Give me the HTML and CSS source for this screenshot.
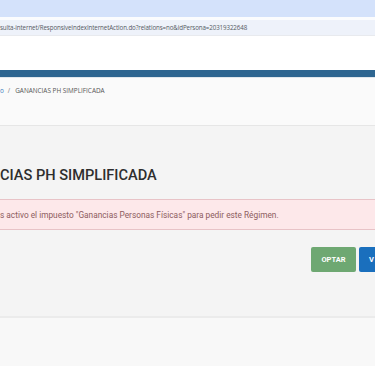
FILE: index.html
```html
<!DOCTYPE html>
<html lang="es">
<head>
<meta charset="utf-8">
<link rel="stylesheet" href="styles.css">
</head>
<body>
<div class="chrome-top"></div>
<div class="chrome-gap"></div>
<div class="url-bar"><span class="url">sulta-internet/ResponsiveIndexInternetAction.do?relations=no&amp;idPersona=20319322648</span></div>
<div class="white-area"></div>
<div class="navband"></div>
<div class="breadcrumb"><a class="crumb-link">o</a><span class="sep">/</span><span class="crumb">GANANCIAS PH SIMPLIFICADA</span></div>
<main class="content">
  <h1 class="title">CIAS PH SIMPLIFICADA</h1>
  <div class="alert">s activo el impuesto "Ganancias Personas Físicas" para pedir este Régimen.</div>
  <div class="actions">
    <button class="btn btn-green">OPTAR</button>
    <button class="btn btn-blue">V</button>
  </div>
</main>
<footer class="footer"></footer>
</body>
</html>
```
FILE: styles.css
```css
html, body {
  margin: 0;
  padding: 0;
  overflow: hidden;
  width: 375px;
  height: 366px;
  font-family: Roboto, "Liberation Sans", sans-serif;
}
.chrome-top {
  height: 17px;
  background: #d4e2fb;
}
.chrome-gap {
  height: 3px;
  background: #fbfcfe;
}
.url-bar {
  height: 15px;
  background: #eef2fa;
  display: flex;
  align-items: center;
  font-family: "Open Sans", "Liberation Sans", sans-serif;
  font-size: 6.2px;
  color: #555a62;
  white-space: nowrap;
  overflow: hidden;
  letter-spacing: -0.1px;
}
.white-area {
  height: 35px;
  background: #ffffff;
  border-top: 1px solid #e8eaee;
  box-sizing: border-box;
}
.navband {
  height: 7px;
  background: #2d6590;
  border-bottom: 1px solid #dfe6ec;
}
.breadcrumb {
  height: 48px;
  background: #fafafa;
  border-bottom: 1px solid #e6e6e6;
  box-sizing: border-box;
  padding-top: 8px;
  font-family: "Open Sans", "Liberation Sans", sans-serif;
  font-size: 6.4px;
  color: #555;
  white-space: nowrap;
}
.crumb-link {
  color: #3a7fc0;
}
.sep {
  margin: 0 5px 0 4px;
  color: #777;
}
.content {
  background: #f4f4f4;
  height: 192px;
  border-bottom: 2px solid #ebebeb;
  padding-top: 40px;
  box-sizing: border-box;
}
.title {
  margin: 0 0 15px 0;
  font-size: 14.6px;
  font-weight: 500;
  color: #2e2e2e;
  line-height: 18px;
  white-space: nowrap;
}
.alert {
  height: 31px;
  box-sizing: border-box;
  background: #fde8ea;
  border: 1px solid #e8c3c7;
  border-left: none;
  border-right: none;
  color: #8d5c60;
  font-size: 8.3px;
  display: flex;
  align-items: center;
  white-space: nowrap;
  overflow: hidden;
}
.actions {
  display: flex;
  justify-content: flex-end;
  gap: 3px;
  margin-top: 17px;
}
.btn {
  height: 25px;
  border: none;
  border-radius: 2px 0 0 2px;
  font-family: Roboto, "Liberation Sans", sans-serif;
  font-size: 7.5px;
  font-weight: 700;
  color: #fff;
  padding: 0;
}
.btn-green {
  width: 45px;
  border-radius: 2px;
  background: #6ea872;
}
.btn-blue {
  width: 16px;
  background: #1a6fbd;
  text-align: left;
  padding-left: 10px;
}
.footer {
  height: 48px;
  background: #f8f8f8;
}
```
